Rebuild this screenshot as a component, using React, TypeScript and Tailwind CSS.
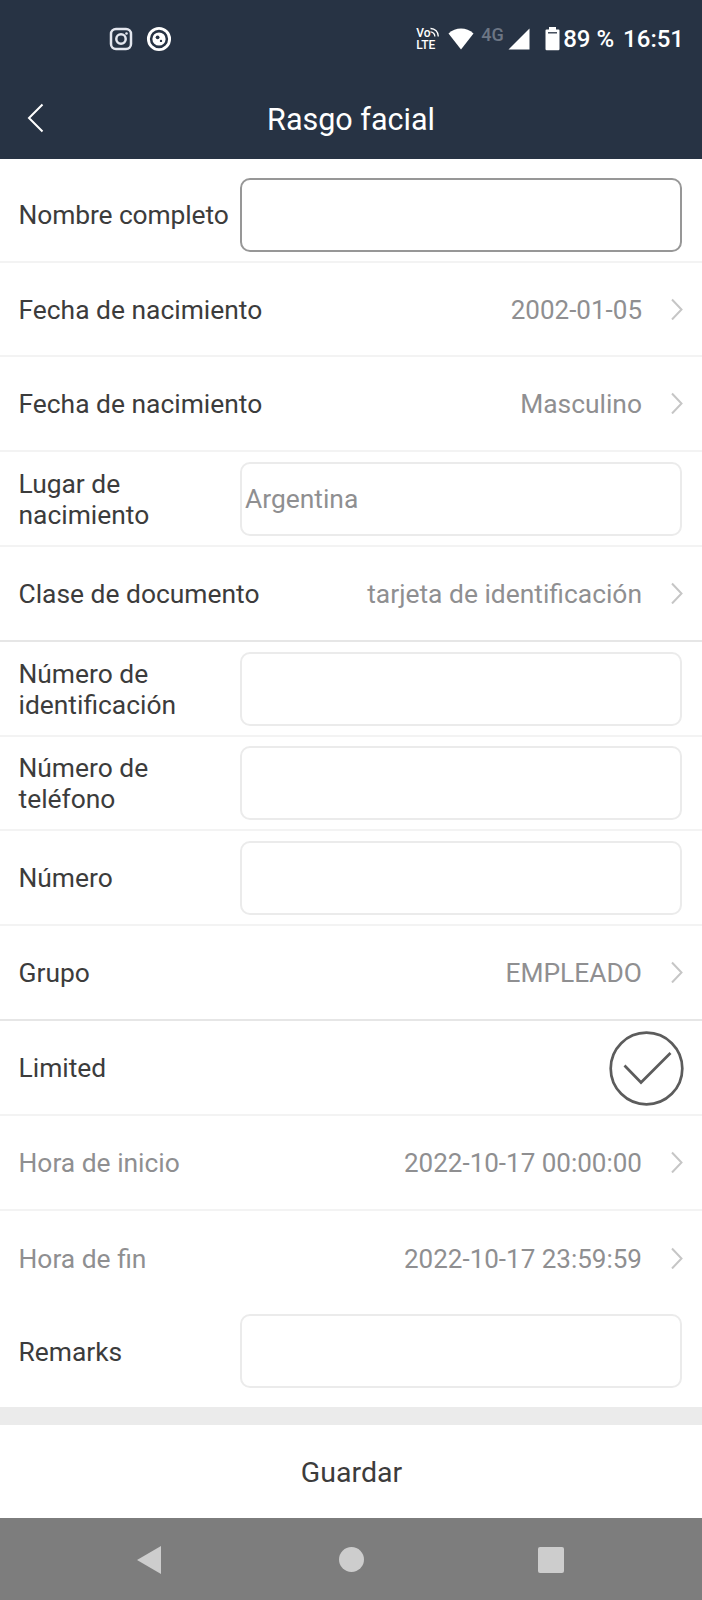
import type { ReactNode } from 'react';
import clsx from 'clsx';

type Field = {
  label: string;
  type: 'input' | 'select' | 'check';
  value?: string;
  muted?: boolean;
  numeric?: boolean;
  height: string;
  border?: string;
  active?: boolean;
};

const LIGHT = 'border-b-2 border-[#f3f3f3]';
const DARK = 'border-b-2 border-[#e6e6e6]';

const fields: Field[] = [
  { label: 'Nombre completo', type: 'input', height: 'h-[104px] pt-[9px]', border: LIGHT, active: true },
  { label: 'Fecha de nacimiento', type: 'select', value: '2002-01-05', numeric: true, height: 'h-[94px]', border: LIGHT },
  { label: 'Fecha de nacimiento', type: 'select', value: 'Masculino', height: 'h-[95px]', border: LIGHT },
  { label: 'Lugar de nacimiento', type: 'input', value: 'Argentina', height: 'h-[95px]', border: LIGHT },
  { label: 'Clase de documento', type: 'select', value: 'tarjeta de identificación', height: 'h-[95px]', border: DARK },
  { label: 'Número de identificación', type: 'input', height: 'h-[95px]', border: LIGHT },
  { label: 'Número de teléfono', type: 'input', height: 'h-[94px]', border: LIGHT },
  { label: 'Número', type: 'input', height: 'h-[95px]', border: LIGHT },
  { label: 'Grupo', type: 'select', value: 'EMPLEADO', height: 'h-[95px]', border: DARK },
  { label: 'Limited', type: 'check', height: 'h-[95px]', border: LIGHT },
  { label: 'Hora de inicio', type: 'select', value: '2022-10-17 00:00:00', muted: true, numeric: true, height: 'h-[95px]', border: LIGHT },
  { label: 'Hora de fin', type: 'select', value: '2022-10-17 23:59:59', muted: true, numeric: true, height: 'h-[94px]' },
  { label: 'Remarks', type: 'input', height: 'h-[102px] pb-[10px]' },
];

const Chevron = () => (
  <svg className="mb-[1px] ml-[29px] h-[22px] w-[13px] shrink-0" viewBox="0 0 13 22" fill="none" stroke="#c6c6c6" strokeWidth="2">
    <path d="M1 1.500 10.500 11.500 1 21.500" />
  </svg>
);

const Row = ({ field }: { field: Field }) => {
  let control: ReactNode;

  if (field.type === 'input') {
    control = (
      <input
        type="text"
        defaultValue={field.value}
        className={clsx(
          'h-[74px] w-[442px] shrink-0 rounded-[10px] border-2 bg-white px-[3px] text-[#8f8f91] outline-none',
          field.active ? 'border-[#979797]' : 'border-[#ebebeb]',
        )}
      />
    );
  } else if (field.type === 'select') {
    control = (
      <div className="mr-[-2px] flex items-center">
        <span className={clsx('pt-[2px] text-[#8f8f91]', field.numeric && 'text-[26px]')}>{field.value}</span>
        <Chevron />
      </div>
    );
  } else {
    control = (
      <svg className="mt-[1px] mr-[-2px] size-[75px]" viewBox="0 0 75 75" fill="none" stroke="#5c5c5c" strokeWidth="2.7">
        <circle cx="37.5" cy="37.5" r="35.8" />
        <path d="M15.5 34.5 32 51.5 61.5 22" />
      </svg>
    );
  }

  return (
    <div className={clsx('flex items-center justify-between pr-[20px] pl-[18.5px]', field.height, field.border)}>
      <label
        className={clsx(
          'pt-[2px] leading-[31px]',
          field.type === 'input' && 'w-[215px]',
          field.active && 'tracking-[-0.1px]',
          field.muted ? 'text-[#8f8f91]' : 'text-[#3c3c3c]',
        )}
      >
        {field.label}
      </label>
      {control}
    </div>
  );
};

const StatusBar = () => (
  <div className="flex h-[77px] items-center pr-[18px] pl-[109px] text-white">
    <svg className="size-6" viewBox="0 0 24 24" fill="none" stroke="#e3e6ee" strokeWidth="2.5">
      <rect x="2" y="2" width="20" height="20" rx="5" />
      <circle cx="12" cy="12" r="4.7" />
      <circle cx="17.5" cy="6.5" r="1.3" fill="#e3e6ee" stroke="none" />
    </svg>
    <svg className="ml-[13px] size-[26px]" viewBox="0 0 26 26">
      <circle cx="13" cy="13" r="10.6" fill="none" stroke="#fff" strokeWidth="2.9" />
      <circle cx="13" cy="13" r="6.6" fill="#fff" />
      <circle cx="11.6" cy="11.3" r="1.9" fill="#273344" />
      <circle cx="15" cy="14.9" r="1.2" fill="#273344" />
    </svg>

    <div className="ml-auto flex items-center">
      <div className="flex w-[21px] flex-col text-[12px] leading-[12px] font-medium">
        <div className="flex items-start">
          <span>Vo</span>
          <svg className="h-[10px] w-[9px] shrink-0" viewBox="0 0 9 10" fill="none" stroke="#fff" strokeWidth="1.3">
            <path d="M.5 1.5A7.5 7.5 0 0 1 8.2 9.5M.5 4.8A4.5 4.5 0 0 1 4.8 9.5" />
          </svg>
        </div>
        <span>LTE</span>
      </div>
      <svg className="ml-[11px] h-[22px] w-[26px]" viewBox="0 0 26 22" fill="#fff">
        <path d="M13 21.5.5 5.5C4 2.2 8.5.5 13 .5s9 1.7 12.5 5Z" />
      </svg>
      <span className="ml-[7px] w-[24px] -translate-y-[4px] text-[18px] leading-[20px] font-medium text-[#6d7684]">4G</span>
      <svg className="ml-[3px] size-[22px]" viewBox="0 0 22 22" fill="#fff">
        <path d="M21.5.5v21H.5Z" />
      </svg>
      <svg className="ml-[15px] h-[24px] w-[15px]" viewBox="0 0 15 24">
        <path fill="#fff" d="M4 0h7v2.5h2.5a1 1 0 0 1 1 1V22a1.2 1.2 0 0 1-1.2 1.2H1.7A1.2 1.2 0 0 1 .5 22V3.5a1 1 0 0 1 1-1H4Z" />
        <path d="M3 5.8h9" stroke="#273344" strokeWidth="1.3" />
      </svg>
      <span className="ml-[3px] pt-[1px] text-[24px] leading-[28px] font-medium">89 %</span>
      <span className="ml-[9px] pt-[1px] text-[24px] leading-[28px] font-medium">16:51</span>
    </div>
  </div>
);

export default function App() {
  return (
    <div className="flex h-[1600px] w-[702px] flex-col overflow-hidden bg-white font-['Roboto',sans-serif] text-[26.4px]">
      <header className="h-[159px] shrink-0 bg-[#273344]">
        <StatusBar />
        <div className="grid h-[82px] grid-cols-[1fr_auto_1fr] items-center px-[26px]">
          <button type="button" aria-label="Volver">
            <svg className="h-[30px] w-[18px]" viewBox="0 0 18 30" fill="none" stroke="#fff" strokeWidth="2">
              <path d="M16.5 1.5 3 15 16.5 28.5" />
            </svg>
          </button>
          <h1 className="pt-[4px] text-[30.5px] text-white">Rasgo facial</h1>
        </div>
      </header>

      <form className="shrink-0">
        {fields.map((field, idx) => (
          <Row key={idx} field={field} />
        ))}
      </form>

      <div className="h-[18px] shrink-0 bg-[#ebebeb]" />
      <button type="button" className="h-[93px] shrink-0 pt-[3px] pl-[1px] text-[28.5px] text-[#3c3c3c]">
        Guardar
      </button>

      <nav className="flex flex-1 items-center justify-between bg-[#7d7d7d] pt-[1px] pr-[138px] pl-[136px]">
        <svg className="h-[30px] w-[26px]" viewBox="0 0 26 30" fill="#cdcdcd">
          <path d="M25 1v28L1 15Z" />
        </svg>
        <div className="ml-[2px] size-[25px] rounded-full bg-[#cdcdcd]" />
        <div className="size-[26px] rounded-[2px] bg-[#cdcdcd]" />
      </nav>
    </div>
  );
}
